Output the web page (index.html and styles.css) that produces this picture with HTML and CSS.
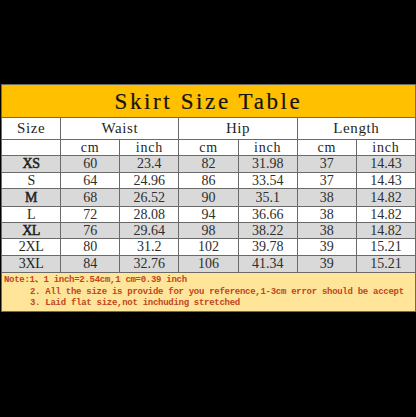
FILE: index.html
```html
<!DOCTYPE html>
<html>
<head>
<meta charset="utf-8">
<link rel="stylesheet" href="styles.css">
</head>
<body>
<div class="sheet">
  <div class="cell title span7">Skirt Size Table</div>

  <div class="cell head">Size</div>
  <div class="cell head span2">Waist</div>
  <div class="cell head span2">Hip</div>
  <div class="cell head span2">Length</div>

  <div class="cell sub"></div>
  <div class="cell sub">cm</div>
  <div class="cell sub">inch</div>
  <div class="cell sub">cm</div>
  <div class="cell sub">inch</div>
  <div class="cell sub">cm</div>
  <div class="cell sub">inch</div>

  <div class="cell grey size bold">XS</div>
  <div class="cell grey">60</div><div class="cell grey">23.4</div>
  <div class="cell grey">82</div><div class="cell grey">31.98</div>
  <div class="cell grey">37</div><div class="cell grey">14.43</div>

  <div class="cell size">S</div>
  <div class="cell">64</div><div class="cell">24.96</div>
  <div class="cell">86</div><div class="cell">33.54</div>
  <div class="cell">37</div><div class="cell">14.43</div>

  <div class="cell grey size bold">M</div>
  <div class="cell grey">68</div><div class="cell grey">26.52</div>
  <div class="cell grey">90</div><div class="cell grey">35.1</div>
  <div class="cell grey">38</div><div class="cell grey">14.82</div>

  <div class="cell size">L</div>
  <div class="cell">72</div><div class="cell">28.08</div>
  <div class="cell">94</div><div class="cell">36.66</div>
  <div class="cell">38</div><div class="cell">14.82</div>

  <div class="cell grey size bold">XL</div>
  <div class="cell grey">76</div><div class="cell grey">29.64</div>
  <div class="cell grey">98</div><div class="cell grey">38.22</div>
  <div class="cell grey">38</div><div class="cell grey">14.82</div>

  <div class="cell size">2XL</div>
  <div class="cell">80</div><div class="cell">31.2</div>
  <div class="cell">102</div><div class="cell">39.78</div>
  <div class="cell">39</div><div class="cell">15.21</div>

  <div class="cell grey size">3XL</div>
  <div class="cell grey">84</div><div class="cell grey">32.76</div>
  <div class="cell grey">106</div><div class="cell grey">41.34</div>
  <div class="cell grey">39</div><div class="cell grey">15.21</div>

  <div class="note span7">
    <div class="note-line">Note:1、1 inch=2.54cm,1 cm=0.39 inch</div>
    <div class="note-line indent">2. All the size is provide for you reference,1-3cm error should be accept</div>
    <div class="note-line indent">3. Laid flat size,not inchuding stretched</div>
  </div>
</div>
</body>
</html>
```

FILE: styles.css
```css
html, body {
  margin: 0;
  padding: 0;
  background: #000;
}

body {
  width: 416px;
  height: 417px;
  overflow: hidden;
}

.sheet {
  margin: 84px 0 0 1px;
  width: 415px;
  box-sizing: border-box;
  padding: 1px;
  background: #6a6a6a;
  display: grid;
  grid-template-columns: repeat(7, 1fr);
  grid-template-rows: 32px 21px 15px 16px 15px 17px 15px 15px 16px 16px 38px;
  gap: 1px;
  font-family: "Liberation Serif", "Times New Roman", serif;
  color: #2e2e2e;
}

.cell {
  background: #fff;
  display: flex;
  align-items: center;
  justify-content: center;
  font-size: 14px;
  line-height: 1;
  white-space: nowrap;
}

.span7 { grid-column: span 7; }
.span2 { grid-column: span 2; }

.title {
  background: #ffc000;
  font-size: 23px;
  letter-spacing: 2.6px;
  color: #141414;
  padding-left: 0;
  -webkit-text-stroke: 0.2px #141414;
}

.head {
  font-size: 15px;
  letter-spacing: 0.6px;
  color: #1f1f1f;
}

.sub {
  font-size: 14px;
  letter-spacing: 0.8px;
  color: #1f1f1f;
}

.grey {
  background: #d9d9d9;
}

.size {
  font-size: 14px;
  letter-spacing: -0.4px;
  color: #1f1f1f;
}

.bold {
  -webkit-text-stroke: 0.5px #1f1f1f;
}

.note {
  background: #ffe599;
  padding: 2px 0 0 2px;
  font-family: "Liberation Mono", "Courier New", "Noto Sans CJK SC", monospace;
  font-weight: bold;
  font-size: 9px;
  letter-spacing: -0.28px;
  line-height: 11.5px;
  color: #c0461f;
  white-space: nowrap;
}

.indent {
  padding-left: 26px;
}
```
